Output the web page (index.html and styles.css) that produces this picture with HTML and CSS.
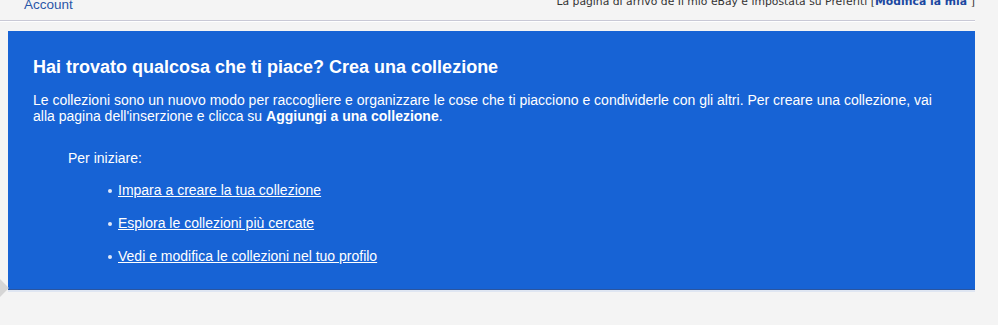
FILE: index.html
```html
<!DOCTYPE html>
<html lang="it">
<head>
<meta charset="utf-8">
<link rel="stylesheet" href="styles.css">
</head>
<body>
<div class="topbar">
  <a class="account" href="#">Account</a>
  <div class="pref">La pagina di arrivo de Il mio eBay è impostata su Preferiti [<a href="#">Modifica la mia </a>]</div>
</div>
<div class="rule"></div>
<div class="panel">
  <h2>Hai trovato qualcosa che ti piace? Crea una collezione</h2>
  <p class="intro">Le collezioni sono un nuovo modo per raccogliere e organizzare le cose che ti piacciono e condividerle con gli altri. Per creare una collezione, vai alla pagina dell'inserzione e clicca su <b>Aggiungi a una collezione</b>.</p>
  <div class="start">
    <p>Per iniziare:</p>
    <ul>
      <li><a href="#">Impara a creare la tua collezione</a></li>
      <li><a href="#">Esplora le collezioni più cercate</a></li>
      <li><a href="#">Vedi e modifica le collezioni nel tuo profilo</a></li>
    </ul>
  </div>
</div>
<div class="chevron"></div>
</body>
</html>
```

FILE: styles.css
```css
html, body { margin: 0; padding: 0; }
body {
  background: #f4f4f4;
  font-family: "Liberation Sans", Arial, sans-serif;
  width: 998px;
  height: 325px;
  overflow: hidden;
  position: relative;
}
.topbar {
  display: flex;
  justify-content: space-between;
  align-items: flex-start;
  height: 20px;
  padding: 0 23px 0 24px;
}
.account {
  color: #2a56a8;
  font-size: 13.5px;
  text-decoration: none;
  line-height: 16px;
  margin-top: -3px;
}
.pref {
  font-family: Verdana, "DejaVu Sans", sans-serif;
  font-size: 10.8px;
  color: #333;
  line-height: 13px;
  margin-top: -5px;
}
.pref a { color: #1a47a0; font-weight: bold; text-decoration: none; }
.rule {
  height: 1px;
  background: #c9c9d6;
  width: 975px;
  box-shadow: 0 1px 0 #ffffff;
}
.panel {
  margin: 10px 0 0 8px;
  width: 967px;
  height: 259px;
  box-sizing: border-box;
  background: #1763d5;
  border-bottom: 1px solid #2a55a0;
  box-shadow: 0 2px 0 #dfe6f2;
  color: #fff;
  padding: 25px 25px 0 25px;
}
h2 {
  margin: 0;
  font-size: 18px;
  font-weight: bold;
  line-height: 22px;
}
.intro {
  margin: 14px 0 0;
  font-size: 14px;
  line-height: 16px;
}
.start { padding-left: 35px; margin-top: 26px; }
.start p { margin: 0; font-size: 14px; line-height: 17px; }
ul {
  margin: 15px 0 0;
  padding-left: 50px;
  list-style: none;
}
li {
  font-size: 14px;
  line-height: 17px;
  margin-bottom: 16px;
  position: relative;
}
li::before {
  content: "";
  position: absolute;
  left: -10px;
  top: 7px;
  width: 4px;
  height: 4px;
  border-radius: 50%;
  background: #dfe8f8;
}
li a { color: #fff; text-decoration: underline; }
.chevron {
  position: absolute;
  left: -8px;
  top: 281px;
  width: 14px;
  height: 14px;
  background: #d6d6d6;
  transform: rotate(45deg);
}
```
